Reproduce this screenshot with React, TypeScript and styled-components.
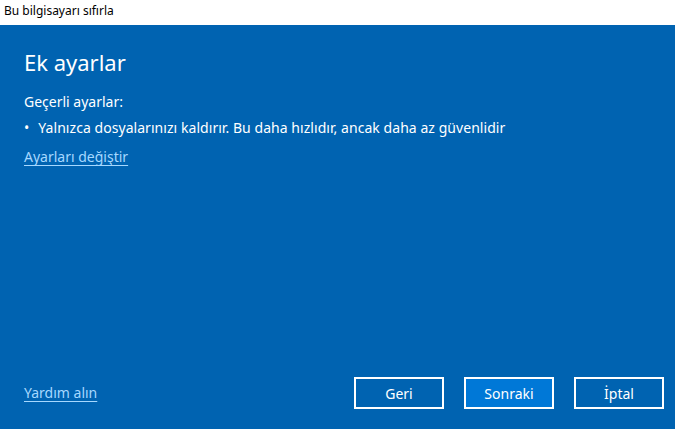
import styled, {createGlobalStyle} from "styled-components";

const Global = createGlobalStyle`
  html, body {
    margin: 0;
    padding: 0;
    background: #0063B1;
  }
  * {
    box-sizing: border-box;
  }
`

const Window = styled.div`
  width: 675px;
  height: 429px;
  display: flex;
  flex-direction: column;
  font-family: "Noto Sans", "Open Sans", sans-serif;
  overflow: hidden;
`

const TitleBar = styled.div`
  height: 25px;
  background: #FFFFFF;
  color: #000000;
  font-size: 12px;
  line-height: 22px;
  padding-left: 4px;
`

const Body = styled.div`
  flex: 1;
  background: #0063B1;
  color: #FFFFFF;
  display: flex;
  flex-direction: column;
  padding: 24px 11px 20px 24px;
`

const Heading = styled.h1`
  margin: 0;
  font-weight: normal;
  font-size: 22px;
  line-height: 26px;
`

const Label = styled.div`
  margin-top: 17px;
  font-size: 14px;
  line-height: 20px;
`

const BulletRow = styled.div`
  margin-top: 6px;
  display: flex;
  gap: 9px;
  font-size: 14px;
  line-height: 20px;
  letter-spacing: 0.05px;
`

const Link = styled.a`
  color: #A6D8FF;
  text-decoration: underline;
  text-underline-offset: 3px;
  font-size: 14px;
  line-height: 20px;
  cursor: pointer;
`

const ChangeLink = styled(Link)`
  margin-top: 9px;
  align-self: flex-start;
`

const Spacer = styled.div`
  flex: 1;
`

const Footer = styled.div`
  display: flex;
  align-items: center;
`

const Buttons = styled.div`
  margin-left: auto;
  display: flex;
  gap: 20px;
`

const Button = styled.button<{ $primary?: boolean }>`
  width: 90px;
  height: 32px;
  border: 2px solid #FFFFFF;
  background: ${p => p.$primary ? "#0078D7" : "transparent"};
  color: #FFFFFF;
  font-family: "Noto Sans", "Open Sans", sans-serif;
  font-size: 14px;
  padding: 0;
`

function App() {
    return <Window>
        <Global/>
        <TitleBar>Bu bilgisayarı sıfırla</TitleBar>
        <Body>
            <Heading>Ek ayarlar</Heading>
            <Label>Geçerli ayarlar:</Label>
            <BulletRow>
                <span>•</span>
                <span>Yalnızca dosyalarınızı kaldırır. Bu daha hızlıdır, ancak daha az güvenlidir</span>
            </BulletRow>
            <ChangeLink>Ayarları değiştir</ChangeLink>
            <Spacer/>
            <Footer>
                <Link>Yardım alın</Link>
                <Buttons>
                    <Button>Geri</Button>
                    <Button $primary>Sonraki</Button>
                    <Button>İptal</Button>
                </Buttons>
            </Footer>
        </Body>
    </Window>
}

export default App
